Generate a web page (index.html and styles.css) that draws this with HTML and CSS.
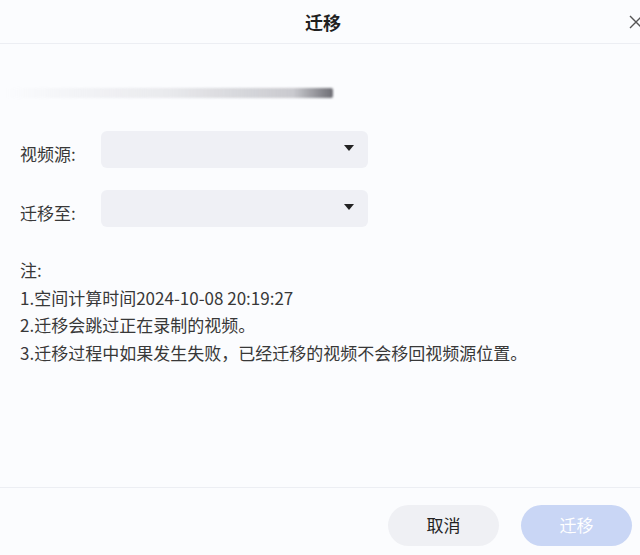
FILE: index.html
```html
<!DOCTYPE html>
<html lang="zh-CN">
<head>
  <meta charset="utf-8">
  <title>迁移</title>
  <link rel="stylesheet" href="styles.css">
</head>
<body>
  <div class="dialog">
    <header class="dialog-head">
      <h1>迁移</h1>
      <span class="close">
        <svg width="14" height="14" viewBox="0 0 14 14"><path d="M1 1L13 13M13 1L1 13" stroke="#555" stroke-width="1.4" fill="none"/></svg>
      </span>
    </header>

    <div class="dialog-body">
      <div class="blur-line"></div>

      <div class="form-row">
        <label>视频源:</label>
        <div class="select"><span class="caret"></span></div>
      </div>
      <div class="form-row">
        <label>迁移至:</label>
        <div class="select"><span class="caret"></span></div>
      </div>

      <div class="notes">
        <p>注:</p>
        <p>1.空间计算时间2024-10-08 20:19:27</p>
        <p>2.迁移会跳过正在录制的视频。</p>
        <p>3.迁移过程中如果发生失败，已经迁移的视频不会移回视频源位置。</p>
      </div>
    </div>

    <footer class="dialog-foot">
      <button class="btn btn-cancel">取消</button>
      <button class="btn btn-ok">迁移</button>
    </footer>
  </div>
</body>
</html>
```

FILE: styles.css
```css
* {
    padding: 0;
    margin: 0;
    box-sizing: border-box;
}
body {
    background: #fbfcfe;
    font-family: "Noto Sans CJK SC", "Noto Sans", sans-serif;
    color: #333;
    width: 640px;
    height: 555px;
    overflow: hidden;
}
.dialog {
    display: flex;
    flex-direction: column;
    height: 555px;
}
.dialog-head {
    position: relative;
    height: 44px;
    border-bottom: 1px solid #eceef3;
    display: flex;
    align-items: center;
    justify-content: center;
}
.dialog-head h1 {
    font-size: 18px;
    font-weight: 600;
    color: #1f1f1f;
    margin-left: 6px;
}
.close {
    position: absolute;
    right: -3px;
    top: 15px;
    width: 14px;
    height: 14px;
    display: flex;
}
.dialog-body {
    flex: 1;
    padding: 44px 20px 0;
}
.blur-line {
    margin-left: -15px;
    width: 328px;
    height: 10px;
    background: linear-gradient(to right, rgba(200,200,206,0) 0%, rgba(200,200,206,.35) 50%, rgba(180,180,186,.7) 88%, #6d6d74 100%);
    filter: blur(1px);
    border-radius: 2px;
}
.form-row {
    display: flex;
    align-items: center;
    height: 37px;
    margin-top: 33px;
}
.form-row + .form-row {
    margin-top: 22px;
}
.form-row label {
    width: 81px;
    font-size: 17px;
    color: #383838;
    padding-top: 7px;
}
.select {
    width: 267px;
    height: 37px;
    background: #eff0f5;
    border-radius: 6px;
    display: flex;
    align-items: center;
    justify-content: flex-end;
    padding-right: 14px;
}
.caret {
    width: 0;
    height: 0;
    border-left: 5px solid transparent;
    border-right: 5px solid transparent;
    border-top: 6px solid #222;
    margin-bottom: 4px;
}
.notes {
    margin-top: 29px;
    font-size: 17px;
    line-height: 27.5px;
    color: #383838;
}
.dialog-foot {
    height: 68px;
    border-top: 1px solid #eceef3;
    display: flex;
    justify-content: flex-end;
    align-items: flex-start;
    gap: 22px;
    padding: 17px 8px 0 0;
}
.btn {
    width: 111px;
    height: 41px;
    border: none;
    border-radius: 21px;
    font-family: "Noto Sans CJK SC", sans-serif;
    font-size: 17px;
    padding-bottom: 3px;
}
.btn-cancel {
    background: #eff0f4;
    color: #222;
}
.btn-ok {
    background: #c9d6f5;
    color: #fff;
}
```
